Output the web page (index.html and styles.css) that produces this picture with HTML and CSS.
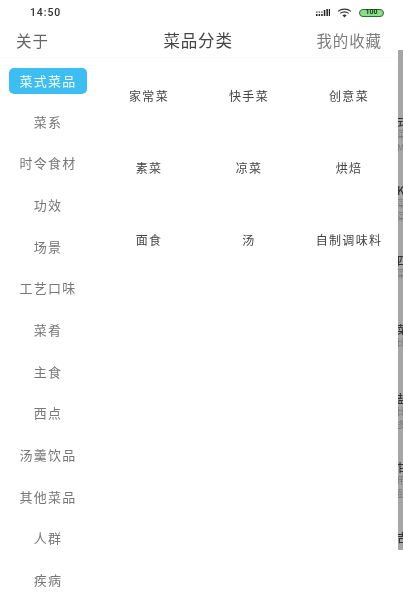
FILE: index.html
```html
<!DOCTYPE html>
<html lang="zh">
<head>
<meta charset="utf-8">
<title>菜品分类</title>
<link rel="stylesheet" href="styles.css">
</head>
<body>
<div class="app">
  <div class="status">
    <span class="time">14:50</span>
    <div class="status-icons">
      <svg class="signal" width="14" height="8" viewBox="0 0 14 8"><g fill="#222"><rect x="0" y="5" width="1.5" height="2"/><rect x="0" y="2.6" width="1.5" height="1"/><rect x="2.6" y="5" width="1.5" height="2"/><rect x="2.6" y="2.6" width="1.5" height="1"/><rect x="5.2" y="5" width="1.5" height="2"/><rect x="5.2" y="2.6" width="1.5" height="1"/><rect x="7.8" y="1" width="1.5" height="6"/><rect x="10.4" y="0" width="1.5" height="7"/><rect x="12.8" y="0" width="1.2" height="7"/></g></svg>
      <svg class="wifi" width="15" height="10" viewBox="0 0 15 10"><g fill="none" stroke="#333" stroke-width="1.1"><path d="M1 3.4C4.8 .4 10.2 .4 14 3.4"/><path d="M3.2 5.4C5.8 3.5 9.2 3.5 11.8 5.4"/></g><path d="M5.4 7.2C6.8 6.2 8.2 6.2 9.6 7.2L7.5 9.4Z" fill="#333"/></svg>
      <div class="battery"><span class="battery-num">100</span></div>
    </div>
  </div>
  <header class="nav">
    <span class="nav-side">关于</span>
    <span class="nav-title">菜品分类</span>
    <span class="nav-side nav-fav">我的收藏</span>
  </header>
  <div class="content">
    <nav class="side">
      <div class="side-item active">菜式菜品</div>
      <div class="side-item">菜系</div>
      <div class="side-item">时令食材</div>
      <div class="side-item">功效</div>
      <div class="side-item">场景</div>
      <div class="side-item">工艺口味</div>
      <div class="side-item">菜肴</div>
      <div class="side-item">主食</div>
      <div class="side-item">西点</div>
      <div class="side-item">汤羹饮品</div>
      <div class="side-item">其他菜品</div>
      <div class="side-item">人群</div>
      <div class="side-item">疾病</div>
    </nav>
    <main class="grid">
      <div class="cell">家常菜</div>
      <div class="cell">快手菜</div>
      <div class="cell">创意菜</div>
      <div class="cell">素菜</div>
      <div class="cell">凉菜</div>
      <div class="cell">烘焙</div>
      <div class="cell">面食</div>
      <div class="cell">汤</div>
      <div class="cell">自制调味料</div>
    </main>
  </div>
  <aside class="peek">
    <div class="peek-block"><b>式</b><i>菜</i><i>M</i></div>
    <div class="peek-block"><b>K</b><i>菜</i><i>菜</i></div>
    <div class="peek-block"><b>四</b><i>菜</i></div>
    <div class="peek-block"><b>菜</b><i>比</i></div>
    <div class="peek-block"><b>盐</b><i>比</i><i>多</i></div>
    <div class="peek-block"><b>甘</b><i>用</i><i>彭</i></div>
    <div class="peek-block"><b>吉</b></div>
  </aside>
</div>
</body>
</html>
```
FILE: styles.css
```css
* { box-sizing: border-box; }
html, body { margin: 0; padding: 0; background: #fff; }
body {
  font-family: "Noto Sans CJK SC", "Noto Sans", sans-serif;
  overflow: hidden;
}
.app {
  position: relative;
  width: 403px;
  height: 600px;
  overflow: hidden;
  background: #fff;
  filter: blur(0.5px);
}
.status {
  display: flex;
  justify-content: space-between;
  align-items: center;
  height: 26px;
  padding: 0 19px 1px 30px;
}
.time {
  font-family: Roboto, "Liberation Sans", sans-serif;
  font-size: 10.5px;
  font-weight: 500;
  letter-spacing: 0.9px;
  color: #333;
}
.status-icons { display: flex; align-items: center; gap: 7px; }
.battery {
  display: flex;
  align-items: center;
  justify-content: center;
  width: 25px;
  height: 8px;
  border-radius: 4px;
  border: 1px solid #2f6b32;
  background: #8ade85;
}
.battery-num {
  font-family: Roboto, "Liberation Sans", sans-serif;
  font-size: 7px;
  font-weight: 700;
  line-height: 1;
  color: #17381a;
}
.nav {
  display: flex;
  justify-content: space-between;
  align-items: center;
  height: 31px;
  padding: 0 21px 4px 16px;
  box-shadow: 0 1px 0 #fbfbfb;
}
.nav-side { font-size: 15.5px; letter-spacing: 0.9px; color: #666; }
.nav-title { font-size: 16.5px; letter-spacing: 0.8px; color: #444; margin-left: 31px; }
.nav-fav { color: #7d7d7d; }
.content { display: flex; }
.side {
  flex: none;
  display: flex;
  flex-direction: column;
  width: 99px;
  padding: 11px 0 0 9px;
  gap: 3.68px;
}
.side-item {
  width: 78px;
  height: 38px;
  display: flex;
  align-items: center;
  justify-content: center;
  font-size: 13px;
  letter-spacing: 1.2px;
  color: #777;
}
.active {
  height: 26px;
  margin: 0 0 4.6px;
  padding-bottom: 2px;
  border-radius: 5px;
  background: #3cbef3;
  color: #fff;
}
.grid {
  flex: none;
  display: grid;
  grid-template-columns: repeat(3, 100px);
  grid-auto-rows: 72px;
  justify-items: center;
  align-items: center;
  width: 300px;
  padding-top: 2px;
}
.cell { font-size: 12px; letter-spacing: 1.3px; color: #444; white-space: nowrap; }
.peek {
  position: absolute;
  left: 398px;
  top: 50px;
  width: 5px;
  height: 500px;
  background: #a6a6a6;
  overflow: hidden;
  padding-top: 65px;
}
.peek-block {
  display: flex;
  flex-direction: column;
  height: 69.3px;
  font-size: 11px;
  line-height: 13px;
  margin-left: -1px;
}
.peek-block b { font-weight: 500; color: #333; }
.peek-block i { font-style: normal; font-size: 9px; color: #777; }
```
